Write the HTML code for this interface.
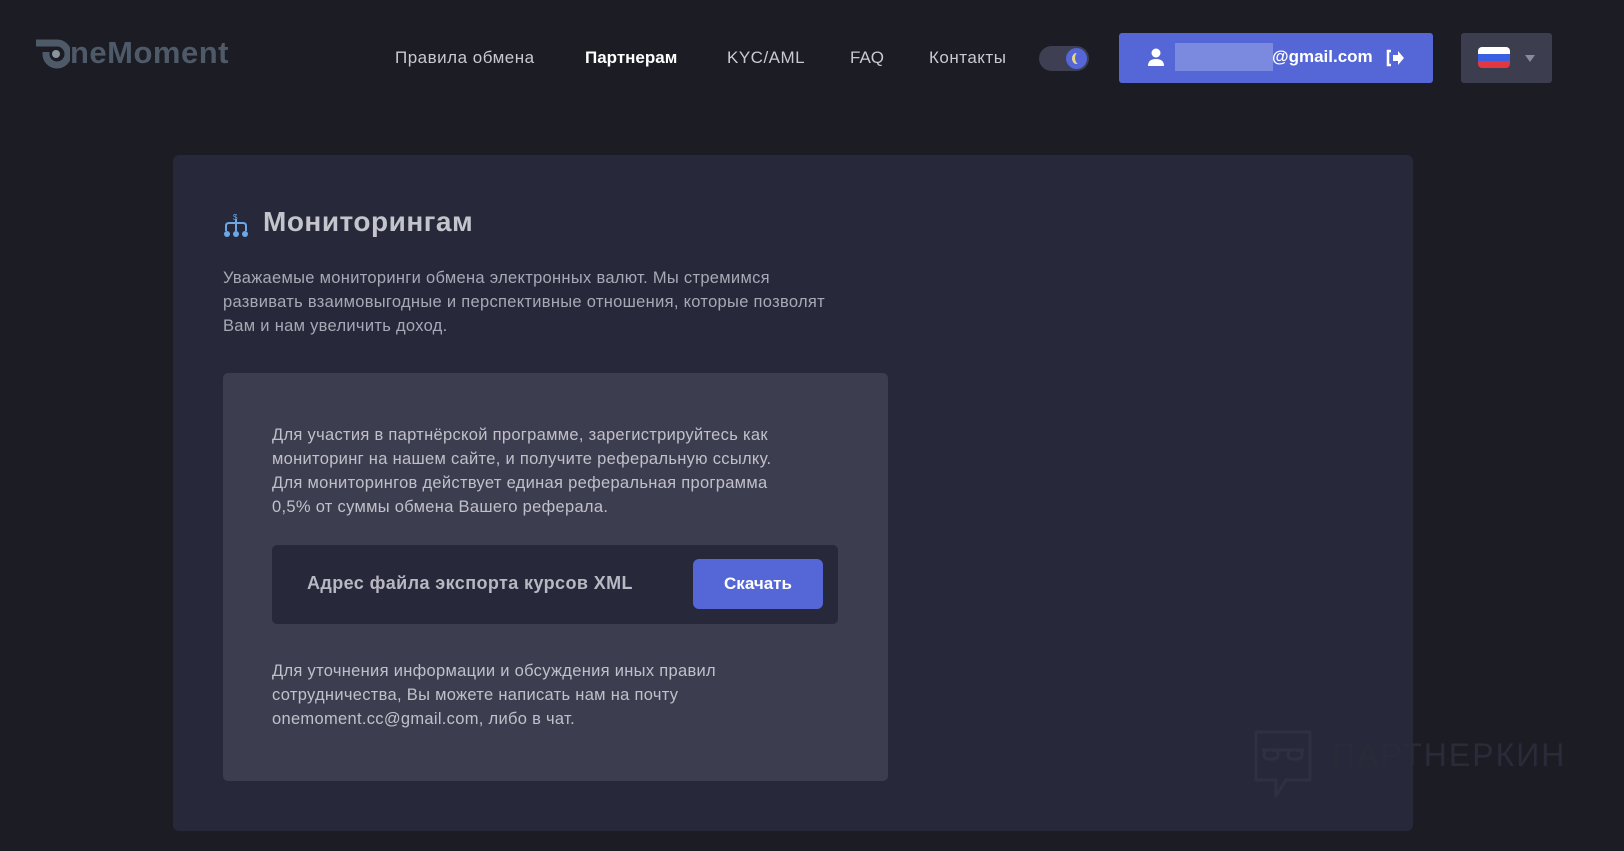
<!DOCTYPE html>
<html><head><meta charset="utf-8"><style>
*{margin:0;padding:0;box-sizing:border-box}
body{width:1624px;height:851px;background:#1c1c25;font-family:"Liberation Sans","DejaVu Sans",sans-serif;position:relative;overflow:hidden;color:#c8c8d0}
.abs{position:absolute}
.nav{font-size:17px;color:#c9c9d2;top:48px}
.card{left:173px;top:155px;width:1240px;height:676px;background:#272839;border-radius:6px}
.inner{left:223px;top:373px;width:665px;height:408px;background:#3d3d50;border-radius:5px}
p{font-size:16.5px;line-height:24px;color:#a8a8b6;letter-spacing:0.3px}
</style></head><body>
<div class="abs" style="left:34px;top:38px;width:32px;height:32px">
<svg width="36" height="34" viewBox="0 0 36 34"><path d="M2 5h21a11 11 0 1 1-11 11v-2" stroke="#4e5a68" stroke-width="7" fill="none" stroke-linejoin="round"/><circle cx="22" cy="16" r="4" fill="#8a939e"/></svg></div>
<div class="abs" style="left:70px;top:35px;font-size:31px;font-weight:bold;color:#4e5a68;letter-spacing:0.5px">neMoment</div>
<div class="abs nav" style="left:395px;letter-spacing:0.5px">Правила обмена</div>
<div class="abs nav" style="left:585px;color:#fff;font-weight:bold">Партнерам</div>
<div class="abs nav" style="left:727px;letter-spacing:0.5px">KYC/AML</div>
<div class="abs nav" style="left:850px">FAQ</div>
<div class="abs nav" style="left:929px;letter-spacing:0.5px">Контакты</div>
<div class="abs" style="left:1039px;top:46px;width:50px;height:25px;border-radius:13px;background:#3e3f52"><div class="abs" style="left:27px;top:2px;width:21px;height:21px;border-radius:50%;background:#5566d6"><div class="abs" style="left:6px;top:5px;width:9px;height:11px;border-radius:50%;background:#e8d88a"></div><div class="abs" style="left:9px;top:4px;width:8px;height:12px;border-radius:50%;background:#5566d6"></div></div></div>
<div class="abs" style="left:1119px;top:33px;width:314px;height:50px;background:#5566d6;border-radius:3px">
<svg class="abs" style="left:28px;top:15px" width="18" height="18" viewBox="0 0 18 18"><circle cx="9" cy="5" r="4.5" fill="#fff"/><path d="M1 18q0-7 8-7t8 7z" fill="#fff"/></svg>
<div class="abs" style="left:56px;top:10px;width:98px;height:28px;background:#7b8adf"></div>
<div class="abs" style="left:153px;top:14px;font-size:17px;color:#fff;font-weight:bold">@gmail.com</div>
<svg class="abs" style="left:266px;top:16px" width="20" height="18" viewBox="0 0 20 18"><path d="M6 2H3v14h3" stroke="#fff" stroke-width="2.5" fill="none"/><path d="M8 6h5V2l6 7-6 7v-4H8z" fill="#fff"/></svg>
</div>
<div class="abs" style="left:1461px;top:33px;width:91px;height:50px;background:#3d3d50;border-radius:3px">
<div class="abs" style="left:17px;top:14px;width:32px;height:21px;border-radius:4px;overflow:hidden"><div style="height:7px;background:#fff"></div><div style="height:7px;background:#3a5fe0"></div><div style="height:7px;background:#e0383e"></div></div>
<div class="abs" style="left:64px;top:22px;border-left:5px solid transparent;border-right:5px solid transparent;border-top:7px solid #8a8a98"></div></div>
<div class="abs card"></div>
<svg class="abs" style="left:223px;top:212px" width="26" height="26" viewBox="0 0 26 26"><path d="M3 19v-5q0-3 3-3h14q3 0 3 3v5M13 7v12" stroke="#6aa8e8" stroke-width="2" fill="none"/><circle cx="4" cy="22" r="3" fill="#6aa8e8"/><circle cx="13" cy="22" r="3" fill="#6aa8e8"/><circle cx="22" cy="22" r="3" fill="#6aa8e8"/><text x="10" y="8" font-size="8" fill="#6aa8e8">$</text></svg>
<div class="abs" style="left:263px;top:206px;font-size:28px;font-weight:bold;color:#c4c4cc;letter-spacing:0.5px">Мониторингам</div>
<div class="abs" style="left:223px;top:266px;width:615px"><p>Уважаемые мониторинги обмена электронных валют. Мы стремимся развивать взаимовыгодные и перспективные отношения, которые позволят Вам и нам увеличить доход.</p></div>
<div class="abs inner"></div>
<div class="abs" style="left:272px;top:423px;width:525px"><p style="color:#c0c0ca">Для участия в партнёрской программе, зарегистрируйтесь как мониторинг на нашем сайте, и получите реферальную ссылку. Для мониторингов действует единая реферальная программа 0,5% от суммы обмена Вашего реферала.</p></div>
<div class="abs" style="left:272px;top:545px;width:566px;height:79px;background:#27283a;border-radius:5px">
<div class="abs" style="left:35px;top:28px;font-size:18px;font-weight:bold;color:#b8b8c2;letter-spacing:0.4px">Адрес файла экспорта курсов XML</div>
<div class="abs" style="left:421px;top:14px;width:130px;height:50px;background:#5566d6;border-radius:6px;color:#fff;font-weight:bold;font-size:17px;text-align:center;line-height:50px">Скачать</div></div>
<div class="abs" style="left:272px;top:659px;width:490px"><p style="color:#c0c0ca">Для уточнения информации и обсуждения иных правил сотрудничества, Вы можете написать нам на почту onemoment.cc@gmail.com, либо в чат.</p></div>
<svg class="abs" style="left:1252px;top:730px" width="62" height="70" viewBox="0 0 62 70"><path d="M4 2h54v48H34l-10 16V50H4z" stroke="#2f3042" stroke-width="3" fill="none" stroke-linejoin="round"/><rect x="12" y="20" width="14" height="9" rx="4" stroke="#2f3042" stroke-width="3" fill="none"/><rect x="36" y="20" width="14" height="9" rx="4" stroke="#2f3042" stroke-width="3" fill="none"/><path d="M10 20h42" stroke="#2f3042" stroke-width="3"/></svg>
<div class="abs" style="left:1332px;top:737px;font-size:32px;color:#2a2b39;letter-spacing:2px">ПАРТНЕРКИН</div>
</body></html>
